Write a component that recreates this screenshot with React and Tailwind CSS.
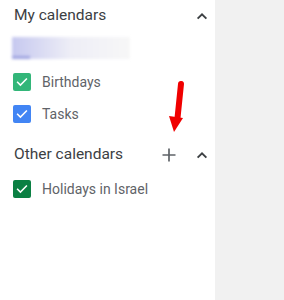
import React from "react";

function Check({ color }) {
  return (
    <div className={`w-[18px] h-[18px] rounded-[2px] flex items-center justify-center ${color}`}>
      <svg width="14" height="14" viewBox="0 0 24 24">
        <path d="M4.5 12.5l4.8 4.8L19.5 7" fill="none" stroke="white" strokeWidth="2.6" strokeLinecap="square" />
      </svg>
    </div>
  );
}

function Chevron() {
  return (
    <svg width="14" height="14" viewBox="0 0 24 24">
      <path d="M4.5 16.5L12 9l7.5 7.5" fill="none" stroke="#3c4043" strokeWidth="3.2" />
    </svg>
  );
}

function Row({ color, label }) {
  return (
    <div className="h-[32px] flex items-center pl-[13px]">
      <Check color={color} />
      <span className="ml-[11px] text-[14px] text-[#5f6368]">{label}</span>
    </div>
  );
}

export default function App() {
  return (
    <div className="w-[284px] h-[300px] flex bg-[#f1f1f1] relative overflow-hidden" style={{ fontFamily: "Roboto, 'Liberation Sans', sans-serif" }}>
      <div className="w-[215px] h-full bg-white flex flex-col">
        <div className="h-[30px] pt-[1px] flex items-center justify-between pl-[14px] pr-[6px]">
          <span className="text-[15.5px] text-[#3c4043]">My calendars</span>
          <Chevron />
        </div>
        <div className="h-[36px] pt-[7px] pl-[12px]">
          <div className="relative w-[118px] h-[22px] blur-[1.5px] bg-gradient-to-r from-[#c6c8ef] via-[#eeeef6] to-[#f7f7f7]">
            <div className="absolute left-0 bottom-0 w-[18px] h-[3px] bg-[#9ea3e0]" />
          </div>
        </div>
        <Row color="bg-[#33b679]" label="Birthdays" />
        <Row color="bg-[#4285f4]" label="Tasks" />
        <div className="h-[8px]" />
        <div className="h-[32px] pt-[1px] flex items-center pl-[14px] pr-[6px]">
          <span className="text-[15.5px] text-[#3c4043]">Other calendars</span>
          <svg className="ml-auto mr-[19px]" width="14" height="14" viewBox="0 0 14 14">
            <path d="M7 0.5v13M0.5 7h13" stroke="#5f6368" strokeWidth="1.7" />
          </svg>
          <Chevron />
        </div>
        <div className="h-[3px]" />
        <Row color="bg-[#0b8043]" label="Holidays in Israel" />
      </div>
      <svg className="absolute left-0 top-0" width="284" height="300" viewBox="0 0 284 300">
        <path d="M181 84 L177.5 118" stroke="#f00000" strokeWidth="6" strokeLinecap="round" fill="none" />
        <path d="M169 116 L183 118 L174 132 Z" fill="#f00000" />
      </svg>
    </div>
  );
}
